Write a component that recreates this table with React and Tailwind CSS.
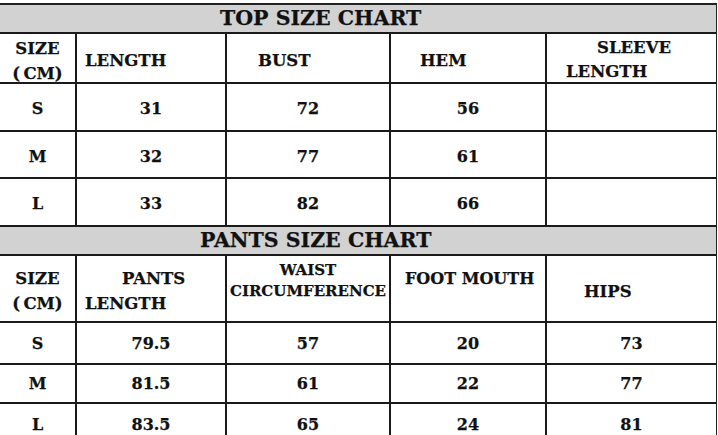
import React from 'react';

// column widths (last one takes the rest)
const cols = ['w-[77px]', 'w-[150px]', 'w-[164px]', 'w-[156px]', 'flex-1'];

const Cell = ({ i, children, className = '' }) => (
  <div
    className={`${cols[i]} ${i < 4 ? 'border-r-2 border-[#1a1a1a]' : ''} h-full flex items-center justify-center ${className}`}
  >
    {children}
  </div>
);

const Row = ({ h, values, pad = 'pt-[4px]' }) => (
  <div className={`flex ${h} border-b-2 border-[#1a1a1a] text-[16px] font-bold`}>
    {values.map((v, i) => (
      <Cell key={i} i={i} className={pad}>
        {v}
      </Cell>
    ))}
  </div>
);

const Title = ({ children, pad }) => (
  <div className={`h-[29px] bg-[#d2d2d2] border-b-2 border-[#1a1a1a] flex items-center ${pad} text-[20.5px] font-bold`}>
    {children}
  </div>
);

const SizeHead = () => (
  <div className="flex flex-col items-center leading-[25px]">
    <span>SIZE</span>
    <span>(&thinsp;CM)</span>
  </div>
);

export default function App() {
  return (
    <div className="w-[718px] h-[435px] bg-white overflow-hidden pt-[3px] text-[#111] font-['DejaVu_Serif','Liberation_Serif',serif] [-webkit-text-stroke:0.25px_#111]">
      <div className="border-t-2 border-r border-[#222] w-[717px]">
        <Title pad="pl-[220px]">TOP SIZE CHART</Title>

        <div className="flex h-[50px] border-b-2 border-[#1a1a1a] text-[16.5px] font-bold">
          <Cell i={0} className="pt-[5px]">
            <SizeHead />
          </Cell>
          <Cell i={1} className="!justify-start pl-[8px] pt-[6px]">
            LENGTH
          </Cell>
          <Cell i={2} className="!justify-start pl-[31px] pt-[6px]">
            BUST
          </Cell>
          <Cell i={3} className="!justify-start pl-[29px] pt-[6px]">
            HEM
          </Cell>
          <Cell i={4} className="!justify-start !items-start pt-[2px]">
            <div className="flex flex-col leading-[24px]">
              <span className="pl-[50px]">SLEEVE</span>
              <span className="pl-[19px]">LENGTH</span>
            </div>
          </Cell>
        </div>

        <Row h="h-[48px]" values={['S', '31', '72', '56', '']} />
        <Row h="h-[47px]" values={['M', '32', '77', '61', '']} />
        <Row h="h-[48px]" values={['L', '33', '82', '66', '']} />

        <Title pad="pl-[200px]">PANTS SIZE CHART</Title>

        <div className="flex h-[67px] border-b-2 border-[#1a1a1a] text-[16.5px] font-bold">
          <Cell i={0} className="pt-[4px]">
            <SizeHead />
          </Cell>
          <Cell i={1} className="!justify-start pt-[4px]">
            <div className="flex flex-col leading-[25px]">
              <span className="pl-[45px]">PANTS</span>
              <span className="pl-[8px]">LENGTH</span>
            </div>
          </Cell>
          <Cell i={2} className="!items-start pt-[4px] text-[15px]">
            <div className="flex flex-col items-center leading-[21px]">
              <span>WAIST</span>
              <span>CIRCUMFERENCE</span>
            </div>
          </Cell>
          <Cell i={3} className="!justify-start !items-start pl-[14px] pt-[11px] text-[16px]">
            FOOT MOUTH
          </Cell>
          <Cell i={4} className="!justify-start pl-[37px] pt-[7px]">
            HIPS
          </Cell>
        </div>

        <Row h="h-[42px]" values={['S', '79.5', '57', '20', '73']} pad="pt-[2px]" />
        <Row h="h-[39px]" values={['M', '81.5', '61', '22', '77']} pad="pt-[1px]" />
        <Row h="h-[40px]" values={['L', '83.5', '65', '24', '81']} pad="pt-[4px]" />
      </div>
    </div>
  );
}
